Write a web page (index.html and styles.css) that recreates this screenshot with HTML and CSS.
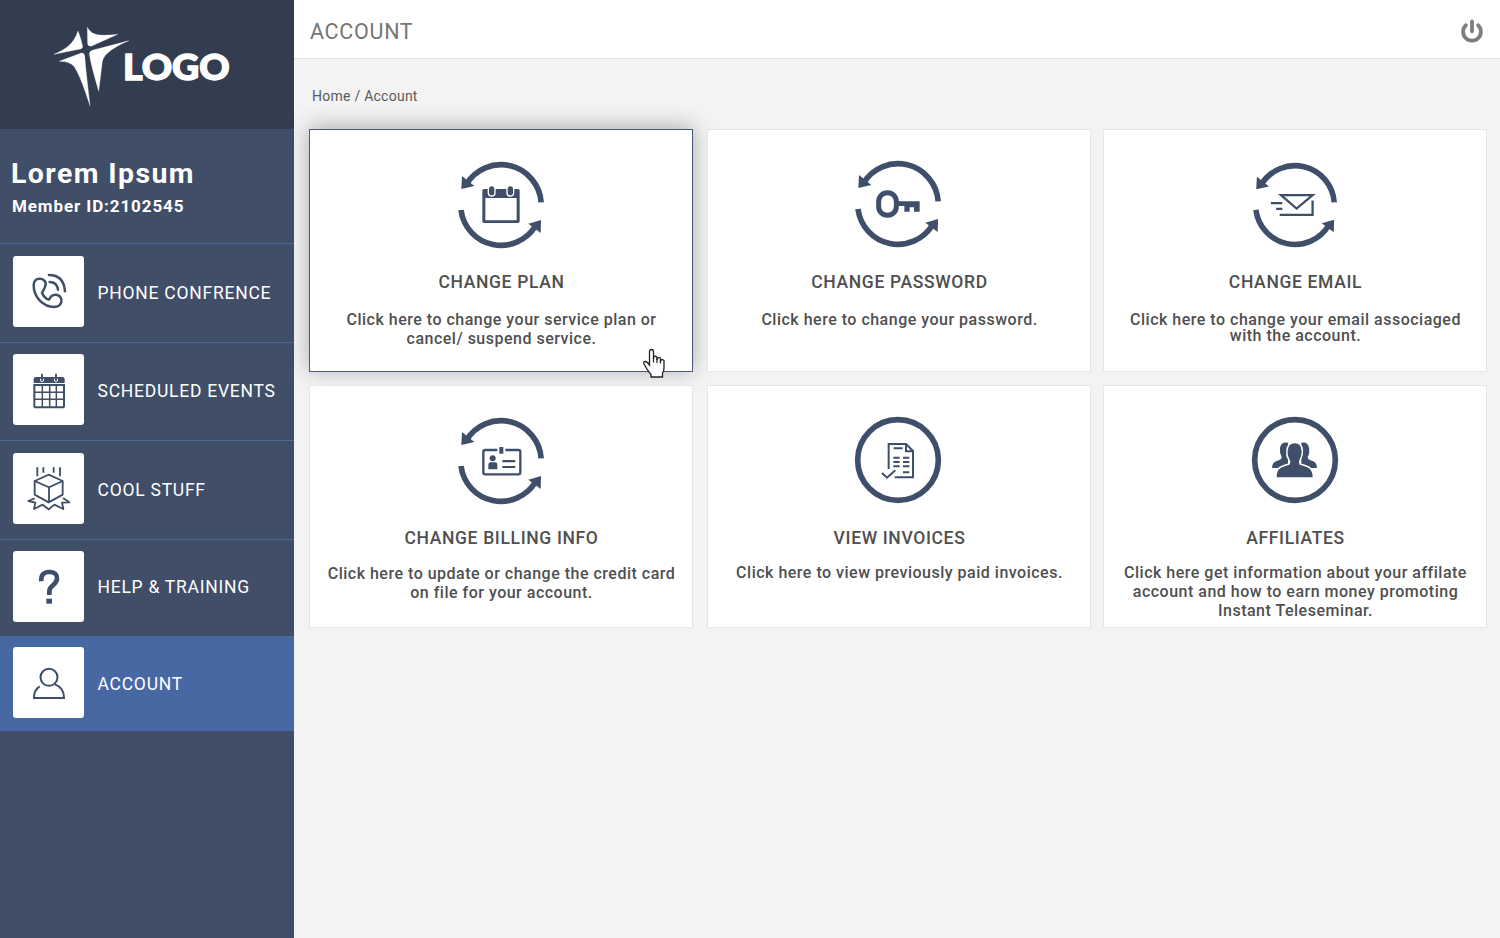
FILE: index.html
```html
<!DOCTYPE html>
<html lang="en">
<head>
    <meta charset="UTF-8">
    <meta name="viewport" content="width=device-width, initial-scale=1.0">
    <title>Account</title>
    <link rel="stylesheet" href="styles.css">
</head>
<body>
    <!-- shared icon frames -->
    <svg class="defs" width="0" height="0">
        <symbol id="arrows" viewBox="-132 -132 264 264">
            <path d="M-104 -62A121 121 0 0 1 120.500 -8" fill="none" stroke="#3f4e69" stroke-width="17"/>
            <path d="M-120 15A121 121 0 0 0 104 62" fill="none" stroke="#3f4e69" stroke-width="17"/>
            <path d="M-117 -87L-119 -48L-80 -57ZM120 45L119 84L82 56Z" fill="#3f4e69"/>
        </symbol>
    </svg>

    <div class="page">
        <aside class="sidebar">
            <div class="logo">
                <svg width="180" height="84" viewBox="160 75 540 252">
                    <g fill="#fff" stroke="#fff" stroke-width="1">
                        <path d="M163 163C196 150 224 130 235 93C240 105 246 125 249 140Q248 145 242 147Z"/>
                        <path d="M263 82C276 104 290 110 354 103L276 138Q265 140 264 132Z"/>
                        <path d="M387 122C350 138 312 160 308 184C304 215 301 245 297 273C288 240 274 195 269 161Q270 153 278 151Z"/>
                        <path d="M179 184L245 159Q254 158 255 168C259 220 266 270 271 317C256 270 240 225 224 200Q210 184 179 184Z"/>
                    </g>
                    <text x="370" y="241" class="logo-text" textLength="320" lengthAdjust="spacingAndGlyphs">LOGO</text>
                </svg>
            </div>
            <div class="member">
                <div class="member-name">Lorem Ipsum</div>
                <div class="member-id">Member ID:2102545</div>
            </div>
            <nav class="menu">
                <a class="menu-item phone">
                    <span class="menu-icon">
                        <svg width="72" height="72" viewBox="39 48 216 216" fill="none" stroke="#3f4e69" stroke-width="7.500" stroke-linecap="round" stroke-linejoin="round">
                            <path d="M136 137C140 124 130 116 119 116C107 116 101 125 101 136C101 172 130 201 163 201C178 201 186 191 184 178C182 166 170 162 158 166C152 168 151 174 147 179C137 176 130 168 126 158C129 152 135 146 136 137Z"/>
                            <path d="M149 126Q171 126 174 149M147 105Q191 105 195 154"/>
                        </svg>
                    </span>
                    <span class="menu-label">PHONE CONFRENCE</span>
                </a>
                <a class="menu-item events">
                    <span class="menu-icon">
                        <svg width="72" height="72" viewBox="39 342 216 216" fill="none" stroke="#3f4e69">
                            <path d="M101 429V418Q101 411 108 411H187Q194 411 194 418V429Z" fill="#3f4e69" stroke="none"/>
                            <path d="M103 435H192V497Q192 502 187 502H108Q103 502 103 497Z" stroke-width="6"/>
                            <path d="M127 437V500M149 437V500M169 437V500M104 457H191M104 478H191" stroke-width="4.500"/>
                            <path d="M122 416Q119 425 126 425Q133 425 130 416M164 416Q161 425 168 425Q175 425 172 416" stroke="#fff" stroke-width="3"/>
                            <path d="M126 401V419M168 401V419" stroke-width="5.500"/>
                        </svg>
                    </span>
                    <span class="menu-label">SCHEDULED EVENTS</span>
                </a>
                <a class="menu-item stuff">
                    <span class="menu-icon">
                        <svg width="72" height="72" viewBox="39 39 216 216" fill="none" stroke="#3f4e69" stroke-width="5.500">
                            <path d="M112 82V109M130 82V98M161 82V98M180 82V109"/>
                            <path d="M146 104L188 123V164L146 187L104 164V123ZM104 123L147 142L188 123M147 142V187"/>
                            <path d="M104 175L85 183L106 188L102 207L128 194L146 208L163 194L190 207L186 188L208 187L189 174" stroke-linejoin="round"/>
                        </svg>
                    </span>
                    <span class="menu-label">COOL STUFF</span>
                </a>
                <a class="menu-item help">
                    <span class="menu-icon">
                        <svg width="72" height="72" viewBox="39 331 216 216">
                            <path d="M124 422C122 402 132 394 148 394C166 394 172 403 171 415C169 434 149 434 148 451V463" fill="none" stroke="#3f4e69" stroke-width="14"/>
                            <path d="M139 474H156V489H139Z" fill="#3f4e69"/>
                        </svg>
                    </span>
                    <span class="menu-label">HELP &amp; TRAINING</span>
                </a>
                <a class="menu-item account active">
                    <span class="menu-icon">
                        <svg width="72" height="72" viewBox="39 621 216 216" fill="none" stroke="#3f4e69" stroke-width="6">
                            <circle cx="147" cy="712" r="25.500"/>
                            <path d="M119 739Q101 751 102 774H192Q192 743 165 733"/>
                        </svg>
                    </span>
                    <span class="menu-label">ACCOUNT</span>
                </a>
            </nav>
        </aside>

        <main class="main">
            <header class="topbar">
                <h1 class="page-title">ACCOUNT</h1>
                <svg class="power" width="24" height="24" viewBox="0 0 24 24" fill="none" stroke="#7e7e7e" stroke-width="3.800" stroke-linecap="round">
                    <path d="M6 6.200A8.900 8.900 0 1 0 18 6.200M12 2.300V12.300"/>
                </svg>
            </header>
            <div class="breadcrumb">Home / Account</div>

            <div class="cards">
                <div class="card hover">
                    <svg class="card-icon" width="88" height="88" viewBox="-132 -132 264 264">
                        <use href="#arrows" x="-132" y="-132" width="264" height="264"/>
                        <g transform="translate(-185 -165)">
                            <path d="M129 122Q129 117 134 117H236Q241 117 241 122V214Q241 219 236 219H134Q129 219 129 214ZM138 144V211H232V144Z" fill="#3f4e69" fill-rule="evenodd"/>
                            <rect x="147" y="107" width="20" height="31" rx="10" fill="#3f4e69" stroke="#fff" stroke-width="4"/>
                            <rect x="203" y="107" width="20" height="31" rx="10" fill="#3f4e69" stroke="#fff" stroke-width="4"/>
                        </g>
                    </svg>
                    <h2 class="card-title">CHANGE PLAN</h2>
                    <p class="card-text">Click here to change your service plan or<br>cancel/ suspend service.</p>
                    <svg class="cursor" width="24" height="31" viewBox="0 0 24 31">
                        <path d="M7.500 17V4Q7.500 1.500 9.500 1.500T11.500 4V11.500V9Q13.500 7.500 15 9V12Q16 8.500 18.500 10V13Q20 10.500 22 12.500V20Q22 23 20.500 25V29H9V26.500Q5 22 2 16Q1 13.500 3 13.500Q5 13.500 7.500 17Z" fill="#fff" stroke="#222" stroke-width="1.300"/>
                        <path d="M11.500 9V14.500M15 10V15M18.500 11V15.500" stroke="#222" stroke-width="1.200"/>
                    </svg>
                </div>
                <div class="card password">
                    <svg class="card-icon" width="88" height="88" viewBox="-132 -132 264 264">
                        <use href="#arrows" x="-132" y="-132" width="264" height="264"/>
                        <g transform="translate(-174 -163)">
                            <rect x="116" y="129" width="53" height="68" rx="26" fill="none" stroke="#3f4e69" stroke-width="15"/>
                            <path d="M172 155H239V186H222V173H209V186H193V169H172Z" fill="#3f4e69"/>
                        </g>
                    </svg>
                    <h2 class="card-title">CHANGE PASSWORD</h2>
                    <p class="card-text">Click here to change your password.</p>
                </div>
                <div class="card email">
                    <svg class="card-icon" width="86" height="88" viewBox="-132 -135 264 270">
                        <use href="#arrows" x="-132" y="-132" width="264" height="264"/>
                        <g transform="translate(-181 -166)" fill="none" stroke="#3f4e69" stroke-width="7">
                            <path d="M138 136H235L186 177Z"/>
                            <path d="M134 196H235V152M107 160H142M123 178H142"/>
                        </g>
                    </svg>
                    <h2 class="card-title">CHANGE EMAIL</h2>
                    <p class="card-text">Click here to change your email associaged<br>with the account.</p>
                </div>
                <div class="card billing">
                    <svg class="card-icon" width="88" height="88" viewBox="-132 -132 264 264">
                        <use href="#arrows" x="-132" y="-132" width="264" height="264"/>
                        <g transform="translate(-185 -166)">
                            <rect x="132" y="133" width="111" height="73" rx="6" fill="none" stroke="#3f4e69" stroke-width="7"/>
                            <path d="M174 122H198V148H174Z" fill="#fff"/>
                            <path d="M180 124H192V144H180ZM147 191V177Q147 170 154 170H167Q174 170 174 177V191ZM189 163H228V170H189ZM189 181H228V187H189Z" fill="#3f4e69"/>
                            <circle cx="160" cy="158" r="9" fill="#3f4e69"/>
                        </g>
                    </svg>
                    <h2 class="card-title">CHANGE BILLING INFO</h2>
                    <p class="card-text">Click here to update or change the credit card<br>on file for your account.</p>
                </div>
                <div class="card invoices">
                    <svg class="card-icon" width="88" height="88" viewBox="-132 -132 264 264">
                        <circle r="121" fill="none" stroke="#3f4e69" stroke-width="17"/>
                        <g transform="translate(-175 -164)" fill="none" stroke="#3f4e69" stroke-width="6">
                            <path d="M147 191V116H199L220 137V216H165M199 116V138H220M127 203L142 217L167 195"/>
                            <path d="M162 129H189M161 157H180M190 157H209M161 170H180M190 170H209M161 183H180M190 183H209M190 201H209"/>
                        </g>
                    </svg>
                    <h2 class="card-title">VIEW INVOICES</h2>
                    <p class="card-text">Click here to view previously paid invoices.</p>
                </div>
                <div class="card affiliates">
                    <svg class="card-icon" width="88" height="88" viewBox="-132 -132 264 264">
                        <circle r="121" fill="none" stroke="#3f4e69" stroke-width="17"/>
                        <g transform="translate(-180 -164)" fill="#3f4e69">
                            <path d="M111 188Q111 171 125 167Q141 163 140 155Q133 143 135 128Q137 108 159 112V188Z"/>
                            <path d="M246 188Q246 171 233 167Q217 163 218 155Q225 143 222 128Q220 108 199 112V188Z"/>
                            <path d="M125 216Q124 194 138 187Q151 181 163 178Q169 171 163 162Q156 150 158 136Q160 114 179 114Q198 114 200 136Q201 150 194 162Q189 171 194 178Q207 181 220 187Q233 194 233 216Z" stroke="#fff" stroke-width="9" paint-order="stroke"/>
                        </g>
                    </svg>
                    <h2 class="card-title">AFFILIATES</h2>
                    <p class="card-text">Click here get information about your affilate<br>account and how to earn money promoting<br>Instant Teleseminar.</p>
                </div>
            </div>
        </main>
    </div>
</body>
</html>
```

FILE: styles.css
```css
* {
    box-sizing: border-box;
}
body {
    margin: 0;
    font-family: Roboto, Arial, sans-serif;
    background-color: #f3f3f3;
}
.defs {
    display: block;
}
.page {
    display: flex;
    height: 938px;
}

/* sidebar */
.sidebar {
    width: 294px;
    flex: none;
    background-color: #404e67;
    color: #fff;
}
.logo {
    height: 129px;
    padding: 25px 0 0 53px;
    background-color: #333d50;
}
.logo-text {
    font-family: Lato, sans-serif;
    font-weight: 900;
    font-size: 106px;
    fill: #fff;
    stroke: #fff;
    stroke-width: 4px;
}
.member {
    height: 114px;
    padding: 26px 0 0 11px;
}
.member-name {
    font-size: 28.5px;
    font-weight: 700;
    line-height: 37px;
    letter-spacing: 1.4px;
}
.member-id {
    margin-top: 3px;
    padding-left: 1px;
    font-size: 17px;
    font-weight: 700;
    line-height: 22px;
    letter-spacing: 0.9px;
}
.menu-item {
    display: flex;
    gap: 13.5px;
    height: 98px;
    padding: 11px 0 0 13px;
    border-top: 1px solid #4f6892;
}
.menu-item.phone {
    height: 99px;
    padding-top: 12px;
}
.menu-item.stuff {
    height: 99px;
    padding-top: 12px;
}
.menu-item.help {
    height: 97px;
}
.menu-item.account {
    height: 95px;
    padding-top: 10px;
}
.menu-item.active {
    background-color: #4868a3;
}
.menu-icon {
    width: 71px;
    height: 71px;
    background-color: #fff;
    border-radius: 3px;
}
.menu-label {
    font-size: 17.5px;
    line-height: 74px;
    letter-spacing: 0.75px;
}
.help .menu-label {
    line-height: 72px;
}

/* content */
.main {
    flex: 1;
}
.topbar {
    display: flex;
    justify-content: space-between;
    height: 59px;
    padding: 0 16px;
    background-color: #fff;
    border-bottom: 1px solid #e2e2e2;
}
.page-title {
    margin: 0;
    font-size: 21.5px;
    font-weight: 400;
    line-height: 63px;
    letter-spacing: 0.7px;
    color: #757575;
}
.power {
    margin-top: 19px;
}
.breadcrumb {
    height: 70px;
    padding-left: 18px;
    font-size: 14px;
    line-height: 74px;
    letter-spacing: 0.25px;
    color: #5a5a5a;
}
.cards {
    display: grid;
    grid-template-columns: 398px 396px 384px;
    grid-template-rows: 243px 243px;
    row-gap: 13px;
    padding-left: 15px;
}
.card {
    position: relative;
    width: 384px;
    padding-top: 31px;
    text-align: center;
    background-color: #fff;
    border: 1px solid #e6e6e6;
}
.card.hover {
    border-color: #4a5978;
    box-shadow: 0 -2px 20px rgba(0, 0, 0, 0.3);
}
.card-icon {
    display: block;
    margin: 0 auto;
}
.card-title {
    margin: 23px 0 18px;
    padding-left: 1px;
    font-size: 17.5px;
    font-weight: 500;
    line-height: 20px;
    letter-spacing: 0.65px;
    color: #4f4f4f;
}
.card-text {
    margin: 0;
    padding-left: 1px;
    font-size: 16px;
    font-weight: 500;
    line-height: 19px;
    letter-spacing: 0.5px;
    color: #4f4f4f;
}
.card.password,
.card.invoices,
.card.affiliates {
    padding-top: 30px;
}
.password .card-title,
.invoices .card-title,
.affiliates .card-title {
    margin-top: 24px;
}
.password .card-icon,
.invoices .card-icon {
    margin-left: 146.3px;
}
.email .card-text {
    line-height: 16px;
    padding-top: 2px;
}
.billing .card-title {
    margin-bottom: 16px;
}
.invoices .card-title,
.affiliates .card-title {
    margin-bottom: 15px;
}
.cursor {
    position: absolute;
    left: 332px;
    top: 218px;
}
```
